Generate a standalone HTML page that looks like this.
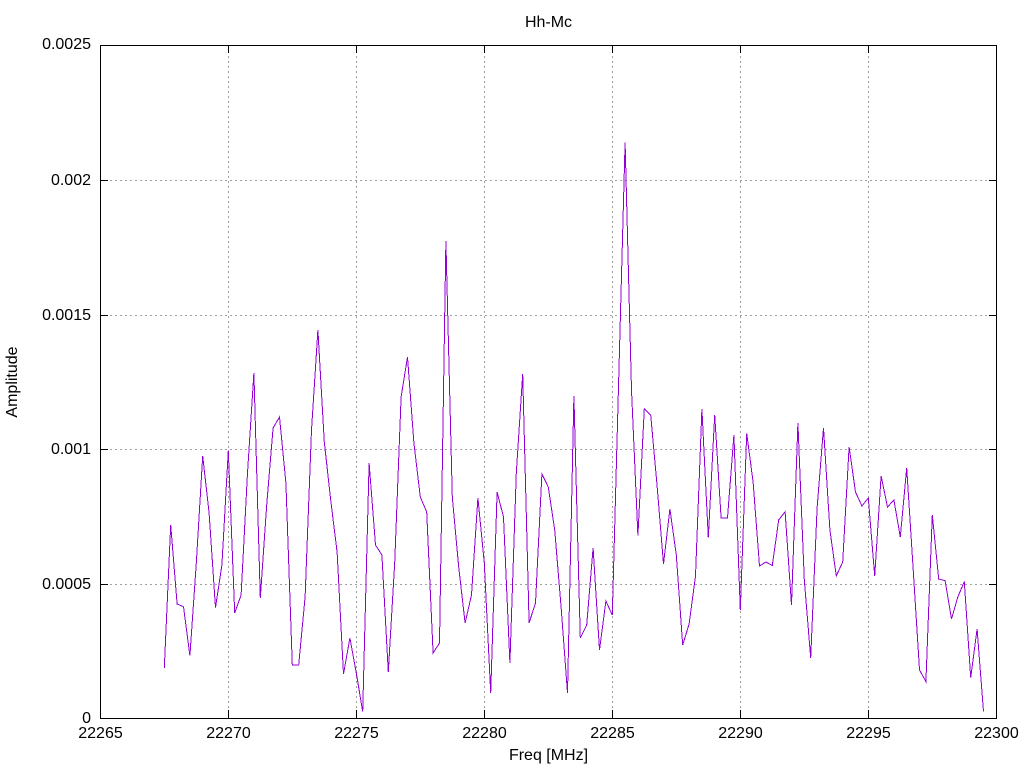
<!DOCTYPE html>
<html>
<head>
<meta charset="utf-8">
<title>Hh-Mc</title>
<style>
html,body{margin:0;padding:0;background:#fff;width:1024px;height:768px;overflow:hidden}
svg{display:block}
text{font-family:"Liberation Sans",sans-serif;font-size:16px;fill:#000}
</style>
</head>
<body>
<svg xmlns="http://www.w3.org/2000/svg" width="1024" height="768" viewBox="0 0 1024 768">
<rect width="1024" height="768" fill="#fff"/>
<g shape-rendering="crispEdges" fill="none" stroke="#a0a0a0" stroke-width="1" stroke-dasharray="2 3">
<path d="M228.5 718V45M356.5 718V45M484.5 718V45M612.5 718V45M740.5 718V45M868.5 718V45"/>
<path d="M100 584.5H997M100 449.5H997M100 315.5H997M100 180.5H997"/>
</g>
<polyline shape-rendering="crispEdges" fill="none" stroke="#9400d3" stroke-width="1" stroke-linejoin="miter" points="164.3,668 170.7,525 177.1,604 183.5,606.7 189.9,655.7 196.3,563 202.7,456 209.1,513 215.5,607.7 221.9,565 228.3,450.7 234.7,613 241.1,595 247.5,473 253.9,373 260.3,598 266.7,505 273.1,428 279.5,417 285.9,483 292.3,665 298.7,665 305.1,597 311.5,430 317.9,330 324.3,442 330.7,500 337.1,552 343.5,674 349.9,638 356.3,673 362.7,711.5 369.1,463 375.5,545 381.9,555 388.3,672 394.7,563 401.1,397 407.5,357 413.9,443 420.3,497 426.7,512 433.1,653 439.5,643 445.9,241 452.3,497 458.7,567 465.1,623 471.5,595 477.9,498 484.3,563 490.7,693 497.1,492 503.5,517 509.9,663 516.3,473 522.7,374 529.1,623 535.5,603 541.9,474 548.3,487 554.7,530 561.1,607 567.5,693 573.9,396 580.3,638 586.7,625 593.1,548 599.5,650 605.9,601 612.3,615 618.7,379 625.1,142.6 631.5,390 637.9,535.6 644.3,408.6 650.7,415 657.1,486 663.5,564 669.9,509 676.3,555 682.7,645 689.1,624 695.5,576 701.9,409 708.3,537.6 714.7,415 721.1,518 727.5,518 733.9,435 740.3,610 746.7,433.5 753.1,482 759.5,566 765.9,562 772.3,565.5 778.7,520 785.1,511.7 791.5,605 797.9,423 804.3,580 810.7,658 817.1,508 823.5,428 829.9,530 836.3,576 842.7,562 849.1,447 855.5,492 861.9,506 868.3,498 874.7,576 881.1,476 887.5,507 893.9,500 900.3,537 906.7,468 913.1,568 919.5,670 925.9,681.6 932.3,515 938.7,579 945.1,580.7 951.5,619 957.9,596.7 964.3,581.7 970.7,677.7 977.1,629 983.5,711.7"/>
<g shape-rendering="crispEdges" fill="none" stroke="#000" stroke-width="1">
<rect x="100.5" y="45.5" width="896" height="673"/>
<path d="M228.5 718V710M356.5 718V710M484.5 718V710M612.5 718V710M740.5 718V710M868.5 718V710"/>
<path d="M228.5 45V53M356.5 45V53M484.5 45V53M612.5 45V53M740.5 45V53M868.5 45V53"/>
<path d="M100 584.5H108M100 449.5H108M100 315.5H108M100 180.5H108"/>
<path d="M997 584.5H989M997 449.5H989M997 315.5H989M997 180.5H989"/>
</g>
<g text-anchor="end">
<text x="91" y="49">0.0025</text>
<text x="91" y="185">0.002</text>
<text x="91" y="320">0.0015</text>
<text x="91" y="454">0.001</text>
<text x="91" y="589">0.0005</text>
<text x="91" y="723">0</text>
</g>
<g text-anchor="middle">
<text x="100.5" y="738">22265</text>
<text x="228.5" y="738">22270</text>
<text x="356.5" y="738">22275</text>
<text x="484.5" y="738">22280</text>
<text x="612.5" y="738">22285</text>
<text x="740.5" y="738">22290</text>
<text x="868.5" y="738">22295</text>
<text x="996.5" y="738">22300</text>
<text x="548.5" y="760">Freq [MHz]</text>
<text x="548.5" y="27">Hh-Mc</text>
<text transform="translate(17 382) rotate(-90)">Amplitude</text>
</g>
</svg>
</body>
</html>
